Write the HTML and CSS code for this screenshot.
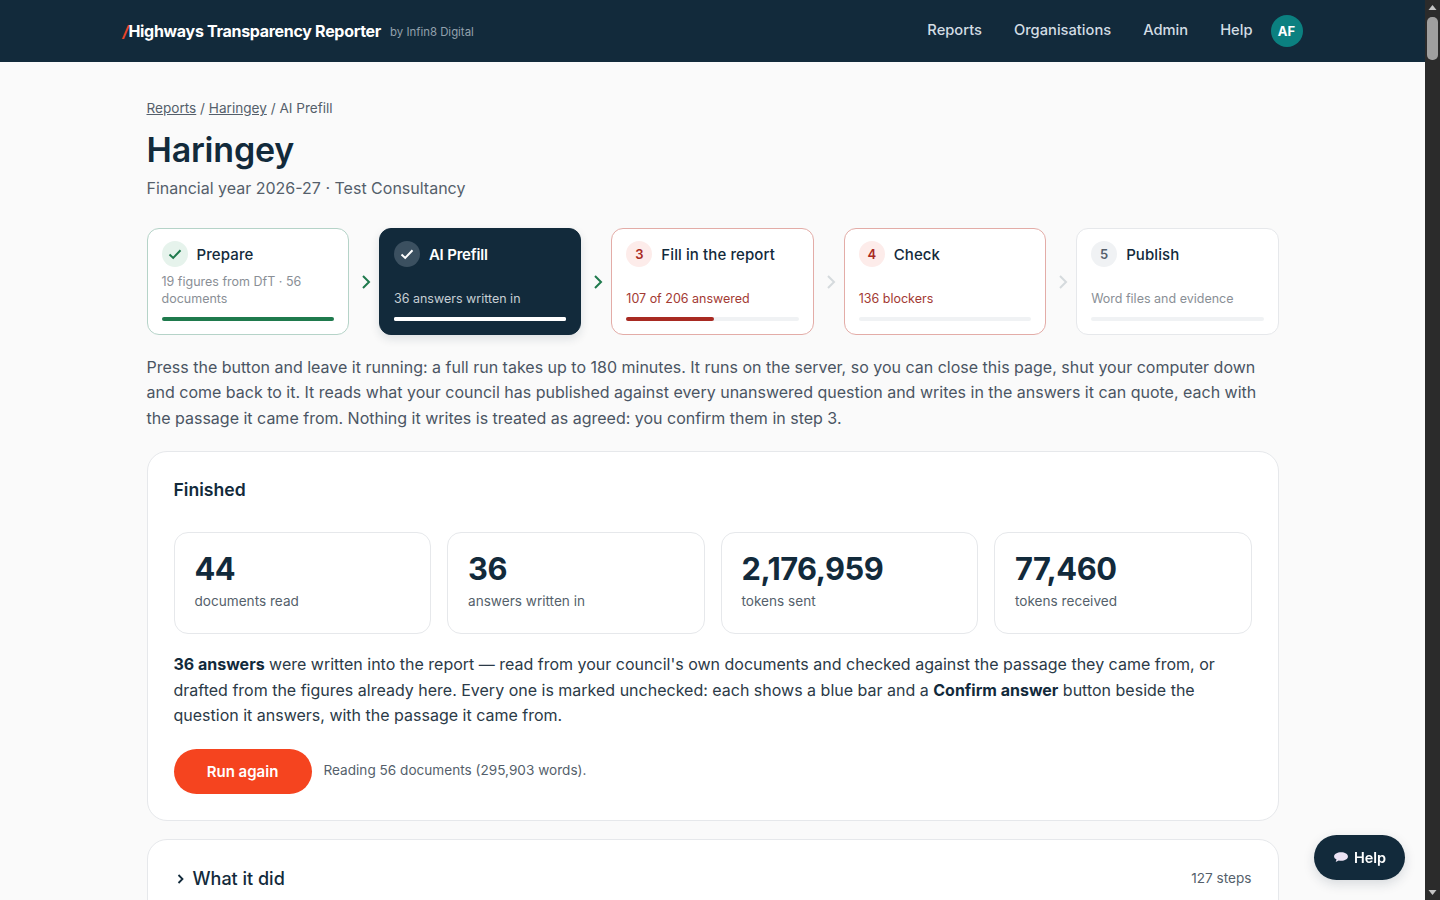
FILE: index.html
```html
<!DOCTYPE html>
<html lang="en">
<head>
    <meta charset="UTF-8">
    <title>Haringey - AI Prefill</title>
    <link rel="stylesheet" href="styles.css">
</head>
<body>

<div class="page">
    <header class="topbar">
        <div class="topbar-inner">
            <a class="brand"><span class="brand-slash">/</span>Highways Transparency Reporter</a>
            <span class="brand-by">by Infin8 Digital</span>
            <nav class="nav">
                <a>Reports</a>
                <a>Organisations</a>
                <a>Admin</a>
                <a>Help</a>
            </nav>
            <div class="avatar">AF</div>
        </div>
    </header>

    <main class="content">
        <div class="crumbs"><a>Reports</a> / <a>Haringey</a> / AI Prefill</div>
        <h1 class="title">Haringey</h1>
        <p class="subtitle">Financial year 2026-27 · Test Consultancy</p>

        <div class="steps">
            <div class="step done">
                <div class="step-head">
                    <span class="step-num">
                        <svg width="14" height="14" viewBox="0 0 14 14"><path d="M1.500 7.500l3.700 3.400L12.500 3.300" fill="none" stroke="currentColor" stroke-width="2"/></svg>
                    </span>
                    <span class="step-name">Prepare</span>
                </div>
                <div class="step-note">19 figures from DfT · 56 documents</div>
                <div class="step-bar"><div class="step-fill" style="width: 100%"></div></div>
            </div>
            <svg class="step-arrow go" width="30" height="16" viewBox="0 0 30 16"><path d="M14 2l6 6-6 6" fill="none" stroke="currentColor" stroke-width="2"/></svg>
            <div class="step current">
                <div class="step-head">
                    <span class="step-num">
                        <svg width="14" height="14" viewBox="0 0 14 14"><path d="M1.500 7.500l3.700 3.400L12.500 3.300" fill="none" stroke="currentColor" stroke-width="2"/></svg>
                    </span>
                    <span class="step-name">AI Prefill</span>
                </div>
                <div class="step-note">36 answers written in</div>
                <div class="step-bar"><div class="step-fill" style="width: 100%"></div></div>
            </div>
            <svg class="step-arrow go" width="30" height="16" viewBox="0 0 30 16"><path d="M14 2l6 6-6 6" fill="none" stroke="currentColor" stroke-width="2"/></svg>
            <div class="step blocked">
                <div class="step-head">
                    <span class="step-num">3</span>
                    <span class="step-name">Fill in the report</span>
                </div>
                <div class="step-note">107 of 206 answered</div>
                <div class="step-bar"><div class="step-fill" style="width: 51%"></div></div>
            </div>
            <svg class="step-arrow" width="30" height="16" viewBox="0 0 30 16"><path d="M14 2l6 6-6 6" fill="none" stroke="currentColor" stroke-width="2"/></svg>
            <div class="step blocked">
                <div class="step-head">
                    <span class="step-num">4</span>
                    <span class="step-name">Check</span>
                </div>
                <div class="step-note">136 blockers</div>
                <div class="step-bar"></div>
            </div>
            <svg class="step-arrow" width="30" height="16" viewBox="0 0 30 16"><path d="M14 2l6 6-6 6" fill="none" stroke="currentColor" stroke-width="2"/></svg>
            <div class="step">
                <div class="step-head">
                    <span class="step-num">5</span>
                    <span class="step-name">Publish</span>
                </div>
                <div class="step-note">Word files and evidence</div>
                <div class="step-bar"></div>
            </div>
        </div>

        <p class="intro">Press the button and leave it running: a full run takes up to 180 minutes. It runs on the server, so you can close this page, shut your computer down and come back to it. It reads what your council has published against every unanswered question and writes in the answers it can quote, each with the passage it came from. Nothing it writes is treated as agreed: you confirm them in step 3.</p>

        <section class="card">
            <h2 class="card-title">Finished</h2>
            <div class="stats">
                <div class="stat"><div class="stat-value">44</div><div class="stat-label">documents read</div></div>
                <div class="stat"><div class="stat-value">36</div><div class="stat-label">answers written in</div></div>
                <div class="stat"><div class="stat-value">2,176,959</div><div class="stat-label">tokens sent</div></div>
                <div class="stat"><div class="stat-value">77,460</div><div class="stat-label">tokens received</div></div>
            </div>
            <p class="result"><strong>36 answers</strong> were written into the report — read from your council's own documents and checked against the passage they came from, or drafted from the figures already here. Every one is marked unchecked: each shows a blue bar and a <strong>Confirm answer</strong> button beside the question it answers, with the passage it came from.</p>
            <div class="actions">
                <button class="run-btn">Run again</button>
                <span class="run-note">Reading 56 documents (295,903 words).</span>
            </div>
        </section>

        <section class="card steps-card">
            <div class="steps-summary">
                <svg width="10" height="12" viewBox="0 0 10 12"><path d="M2.500 2l4 4-4 4" fill="none" stroke="currentColor" stroke-width="1.800"/></svg>
                <span class="summary-title">What it did</span>
                <span class="summary-count">127 steps</span>
            </div>
        </section>
    </main>
</div>

<div class="scrollbar">
    <svg width="15" height="15" viewBox="0 0 15 15"><path d="M3.500 10h8l-4-5z" fill="#c4c4c4"/></svg>
    <div class="scroll-track"><div class="scroll-thumb"></div></div>
    <svg width="15" height="15" viewBox="0 0 15 15"><path d="M3.500 5h8l-4 5z" fill="#c4c4c4"/></svg>
</div>

<button class="help-float">
    <svg width="16" height="13" viewBox="0 0 15 12"><path d="M7.600 1C11.200 1 14 2.600 14 5s-2.800 4-6.400 4c-.8 0-1.500-.1-2.200-.2L2.500 10.200l.8-2.400C1.800 7.100 1 6.100 1 5c0-2.400 3-4 6.600-4z" fill="#ece3f4"/></svg>
    Help
</button>

</body>
</html>
```

FILE: styles.css
```css
* {
    box-sizing: border-box;
}

html, body {
    height: 100%;
}

body {
    margin: 0;
    display: flex;
    overflow: hidden;
    background: #fafafa;
    color: #122a3b;
    font-family: "Inter", "Liberation Sans", sans-serif;
}

.page {
    flex: 1;
    min-width: 0;
    overflow: hidden;
}

.topbar {
    height: 62px;
    background: #122a3b;
}

.topbar-inner {
    max-width: 1180px;
    height: 100%;
    margin: 0 auto;
    display: flex;
    align-items: center;
}

.brand {
    color: #fff;
    font-size: 16px;
    font-weight: 700;
    letter-spacing: -0.3px;
}

.brand-slash {
    color: #e8452a;
    font-style: italic;
}

.brand-by {
    margin-left: 9px;
    padding-top: 1px;
    color: #93a1ac;
    font-size: 11.4px;
}

.nav {
    margin-left: auto;
    padding-bottom: 3px;
    display: flex;
    gap: 32px;
}

.nav a {
    color: #d3dde4;
    font-size: 14.7px;
    font-weight: 500;
}

.avatar {
    width: 32px;
    height: 32px;
    margin-left: 18px;
    padding-bottom: 1px;
    border-radius: 50%;
    background: #0b8080;
    color: #fff;
    font-size: 13px;
    font-weight: 700;
    display: flex;
    align-items: center;
    justify-content: center;
}

.content {
    max-width: 1180px;
    margin: 0 auto;
    padding: 38px 24px 0;
}

.crumbs {
    color: #555f6b;
    font-size: 13.6px;
    line-height: 17px;
}

.crumbs a {
    text-decoration: underline;
}

.title {
    margin: 11px 0 0;
    font-size: 34px;
    line-height: 44px;
    font-weight: 600;
    letter-spacing: -0.2px;
}

.subtitle {
    margin: 3px 0 0;
    color: #555f6b;
    font-size: 16px;
    line-height: 26px;
}

.steps {
    margin-top: 27px;
    display: flex;
    align-items: center;
}

.step {
    flex: 1;
    min-width: 0;
    height: 107px;
    padding: 12px 14px 0;
    display: flex;
    flex-direction: column;
    background: #fff;
    border: 1px solid #e6e8eb;
    border-radius: 12px;
}

.step-head {
    display: flex;
    align-items: center;
    gap: 9px;
}

.step-num {
    width: 26px;
    height: 26px;
    flex: none;
    border-radius: 50%;
    background: #f0f2f4;
    color: #555f6b;
    font-size: 13px;
    font-weight: 600;
    display: flex;
    align-items: center;
    justify-content: center;
}

.step-name {
    font-size: 15px;
    font-weight: 500;
    letter-spacing: 0.1px;
}

.step-note {
    margin-top: auto;
    color: #8a8f96;
    font-size: 12.5px;
    line-height: 17px;
}

.step-bar {
    height: 4px;
    margin: 10px 0 13px;
    flex: none;
    border-radius: 2px;
    background: #f0f2f4;
}

.step-fill {
    height: 100%;
    border-radius: 2px;
    background: #1f7a4d;
}

.step.done {
    border-color: #b5d3c8;
}

.step.done .step-num {
    background: #e6f3ec;
    color: #1f7a4d;
}

.step.current {
    border-color: #122a3b;
    background: #122a3b;
    box-shadow: 0 4px 10px rgba(18, 42, 59, 0.12);
}

.step.current .step-num {
    background: #3b5060;
    color: #fff;
}

.step.current .step-name {
    color: #fff;
    font-weight: 600;
    letter-spacing: -0.2px;
}

.step.current .step-note {
    color: #c6ced4;
}

.step.current .step-fill {
    background: #fff;
}

.step.blocked {
    border-color: #e3aca7;
}

.step.blocked .step-num {
    background: #fdecea;
    color: #a82a22;
}

.step.blocked .step-note {
    color: #a33a33;
}

.step.blocked .step-fill {
    background: #a82a22;
}

.step-arrow {
    width: 30px;
    flex: none;
    color: #d5dadd;
}

.step-arrow.go {
    color: #1f7a4d;
}

.intro {
    margin: 19.7px 0 0;
    color: #4a5563;
    font-size: 16px;
    line-height: 25.6px;
}

.card {
    margin-top: 19.3px;
    padding: 26px;
    background: #fff;
    border: 1px solid #e6e8eb;
    border-radius: 20px;
}

.card-title {
    margin: 0;
    font-size: 17.6px;
    line-height: 24px;
    font-weight: 600;
}

.stats {
    margin-top: 30px;
    display: grid;
    grid-template-columns: repeat(4, 1fr);
    gap: 16px;
}

.stat {
    height: 102px;
    padding: 17px 20px;
    border: 1px solid #e6e8eb;
    border-radius: 14px;
}

.stat-value {
    font-size: 30.8px;
    line-height: 38px;
    font-weight: 700;
    letter-spacing: -0.5px;
}

.stat-label {
    margin-top: 3px;
    color: #555f6b;
    font-size: 13.6px;
    line-height: 20px;
}

.result {
    margin: 18.4px 0 0;
    font-size: 16px;
    line-height: 25.6px;
    color: #2b3a47;
}

.result strong {
    color: #122a3b;
    font-weight: 700;
}

.actions {
    margin-top: 19.6px;
    display: flex;
    align-items: center;
    gap: 12px;
}

.run-btn {
    width: 138px;
    height: 45px;
    border: 0;
    border-radius: 23px;
    background: #f5441f;
    color: #fff;
    font-family: inherit;
    font-size: 15px;
    font-weight: 600;
}

.run-note {
    margin-bottom: 3px;
    color: #555f6b;
    font-size: 13.6px;
}

.steps-card {
    margin-top: 18px;
    padding-top: 25px;
}

.steps-summary {
    display: flex;
    align-items: center;
    gap: 7px;
}

.steps-summary svg {
    margin-left: 2px;
}

.summary-title {
    font-size: 18px;
    line-height: 28px;
    font-weight: 500;
}

.summary-count {
    margin-left: auto;
    margin-bottom: 2px;
    color: #555f6b;
    font-size: 13.6px;
}

.scrollbar {
    width: 15px;
    flex: none;
    display: flex;
    flex-direction: column;
    background: #2b2b2b;
}

.scroll-track {
    flex: 1;
    padding: 2px;
}

.scroll-thumb {
    height: 43px;
    border-radius: 5px;
    background: #9f9f9f;
}

.help-float {
    position: fixed;
    right: 35px;
    bottom: 20px;
    width: 91px;
    height: 45px;
    border: 0;
    border-radius: 23px;
    background: #122a3b;
    color: #fff;
    font-family: inherit;
    font-size: 14.5px;
    font-weight: 600;
    display: flex;
    align-items: center;
    justify-content: center;
    gap: 5px;
    box-shadow: 0 4px 12px rgba(18, 42, 59, 0.15);
}
```
